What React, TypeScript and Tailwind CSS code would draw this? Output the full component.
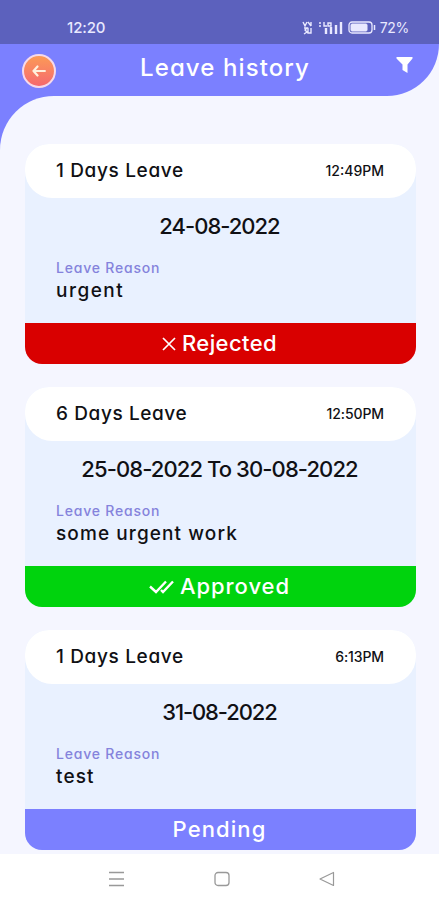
type Leave = {
  days: string
  daysClass: string
  time: string
  timeClass: string
  date: string
  dateClass: string
  reason: string
  reasonClass: string
  status: "Rejected" | "Approved" | "Pending"
}

const leaves: Leave[] = [
  {
    days: "1 Days Leave",
    daysClass: "tracking-[0.65px]",
    time: "12:49PM",
    timeClass: "tracking-[0px]",
    date: "24-08-2022",
    dateClass: "tracking-[-1px]",
    reason: "urgent",
    reasonClass: "tracking-[1.5px]",
    status: "Rejected",
  },
  {
    days: "6 Days Leave",
    daysClass: "tracking-[0.6px]",
    time: "12:50PM",
    timeClass: "tracking-[-0.1px]",
    date: "25-08-2022 To 30-08-2022",
    dateClass: "tracking-[-0.9px]",
    reason: "some urgent work",
    reasonClass: "tracking-[1.1px]",
    status: "Approved",
  },
  {
    days: "1 Days Leave",
    daysClass: "tracking-[0.65px]",
    time: "6:13PM",
    timeClass: "tracking-[-0.1px]",
    date: "31-08-2022",
    dateClass: "tracking-[-1.1px]",
    reason: "test",
    reasonClass: "tracking-[1.1px]",
    status: "Pending",
  },
]

const statusStyles = {
  Rejected: "bg-[#d90000] tracking-[0.4px]",
  Approved: "bg-[#00d30d] tracking-[0.95px]",
  Pending: "bg-[#7b80ff] tracking-[1.1px]",
}

function StatusIcon({ status }: { status: Leave["status"] }) {
  if (status === "Rejected") {
    return (
      <svg className="mr-[6px]" width="14" height="14" viewBox="0 0 14 14" fill="none" stroke="currentColor" strokeWidth="1.7">
        <path d="M1 1l12 12M13 1L1 13" />
      </svg>
    )
  }
  if (status === "Approved") {
    return (
      <svg className="mr-[6px]" width="25" height="14" viewBox="0 0 25 14" fill="none" stroke="currentColor" strokeWidth="2.4">
        <path d="M1 6.500l6 5.500L17 1.500M12 10l2 2L24 1.500" />
      </svg>
    )
  }
  return null
}

function LeaveCard({ leave }: { leave: Leave }) {
  return (
    <div className="h-[220px] flex flex-col rounded-t-[24px] rounded-b-[17px] overflow-hidden bg-[#e9f1ff]">
      <div className="h-[54px] shrink-0 flex items-center justify-between rounded-t-[20px] rounded-b-[27px] bg-white pl-[31px] pr-[32px]">
        <span className={`text-[19px] leading-6 font-medium ${leave.daysClass}`}>{leave.days}</span>
        <span className={`text-[14px] leading-6 font-medium ${leave.timeClass}`}>{leave.time}</span>
      </div>
      <div className="flex-1 flex flex-col pl-[31px] pr-[33px] pt-[14px]">
        <p className={`text-center whitespace-nowrap text-[22px] leading-7 font-medium ${leave.dateClass}`}>{leave.date}</p>
        <p className="mt-[18px] text-[14px] leading-5 tracking-[0.8px] font-medium text-[#8583dc]">Leave Reason</p>
        <p className={`pt-px text-[19px] leading-6 font-medium ${leave.reasonClass}`}>{leave.reason}</p>
      </div>
      <div className={`h-[41px] shrink-0 flex items-center justify-center pr-[2px] text-white text-[22px] leading-7 font-medium ${statusStyles[leave.status]}`}>
        <StatusIcon status={leave.status} />
        <span className="pb-px">{leave.status}</span>
      </div>
    </div>
  )
}

function StatusBar() {
  return (
    <div className="h-11 flex items-center justify-between bg-[#5c61bd] pl-[67px] pr-[30px] pt-[11px] text-[#e9e9ff]">
      <span className="text-[15px] leading-5 font-medium tracking-[-0.1px]">12:20</span>
      <div className="flex items-center">
        <svg width="42" height="14" viewBox="0 0 42 14" fill="none" stroke="currentColor" strokeWidth="1.4">
          <path d="M2 1l2 4 2-4M7 1l3 4M10 1v4M3 7h3l-2 2 2 2-3 2M7 7v5h3V7" />
          <path d="M18 2h2M18 5h2M23 1v4h3M27 2h3v3h-3z" strokeWidth="1.4" />
          <path d="M25 7v6M30 6v7M35 4v9M40 1v12" strokeWidth="2.4" />
        </svg>
        <svg className="ml-[5px]" width="28" height="13" viewBox="0 0 28 13" fill="none" stroke="currentColor">
          <rect x="1" y="1" width="23" height="11" rx="3" strokeWidth="1.3" />
          <rect x="3" y="3" width="16" height="7" rx="1" fill="currentColor" strokeWidth="1" />
          <path d="M26.500 4v5" strokeWidth="1.5" />
        </svg>
        <span className="ml-1 text-[14px] leading-5 tracking-[-0.3px]">72%</span>
      </div>
    </div>
  )
}

export default function App() {
  return (
    <div className="w-full h-[900px] flex flex-col overflow-hidden bg-[#f5f6ff] text-[#101014] font-['Inter',sans-serif] [font-feature-settings:'cv11']">
      <StatusBar />
      <header className="h-[52px] shrink-0 flex items-start justify-between rounded-br-[52px] bg-[#7b80ff] pl-[22px] pr-[26px] text-white">
        <button className="mt-[10px] size-[34px] flex items-center justify-center rounded-full border-2 border-[#f6d9ea] bg-linear-to-b from-[#fb9a55] to-[#f5686e]">
          <svg width="14" height="12" viewBox="0 0 14 12" fill="none" stroke="#fff0dc" strokeLinecap="round" strokeLinejoin="round">
            <path d="M5.500 1.500L1.500 6l4 4.500" strokeWidth="2.200" />
            <path d="M2 6h11" strokeWidth="1.900" />
          </svg>
        </button>
        <h1 className="mt-2 mr-[2px] text-[24px] leading-8 font-medium tracking-[1.1px]">Leave history</h1>
        <svg className="mt-[12px]" width="17" height="18" viewBox="0 0 17 18" fill="currentColor">
          <path d="M.5 1h16v1.500L11.500 8.500V17l-5-3V8.500L.5 2.500z" />
        </svg>
      </header>
      <div className="flex-1 min-h-0 bg-[#7b80ff]">
        <main className="h-full flex flex-col gap-[23px] rounded-tl-[54px] bg-[#f5f6ff] pl-[25px] pr-[23px] pt-12">
          {leaves.map((leave) => (
            <LeaveCard key={leave.date} leave={leave} />
          ))}
        </main>
      </div>
      <nav className="h-[46px] shrink-0 flex items-center bg-white pl-[109px] gap-[89px] pt-1 text-[#999]">
        <svg width="16" height="16" viewBox="0 0 16 16" fill="none" stroke="currentColor" strokeWidth="1.3">
          <path d="M0 1.500h15M0 8h15M0 14.500h15" />
        </svg>
        <svg width="16" height="16" viewBox="0 0 16 16" fill="none" stroke="currentColor" strokeWidth="1.3">
          <rect x="1" y="1.500" width="14" height="13" rx="3" />
        </svg>
        <svg width="16" height="16" viewBox="0 0 16 16" fill="none" stroke="currentColor" strokeWidth="1.2" strokeLinejoin="round">
          <path d="M14.500 1.500v13L1 8z" />
        </svg>
      </nav>
    </div>
  )
}
